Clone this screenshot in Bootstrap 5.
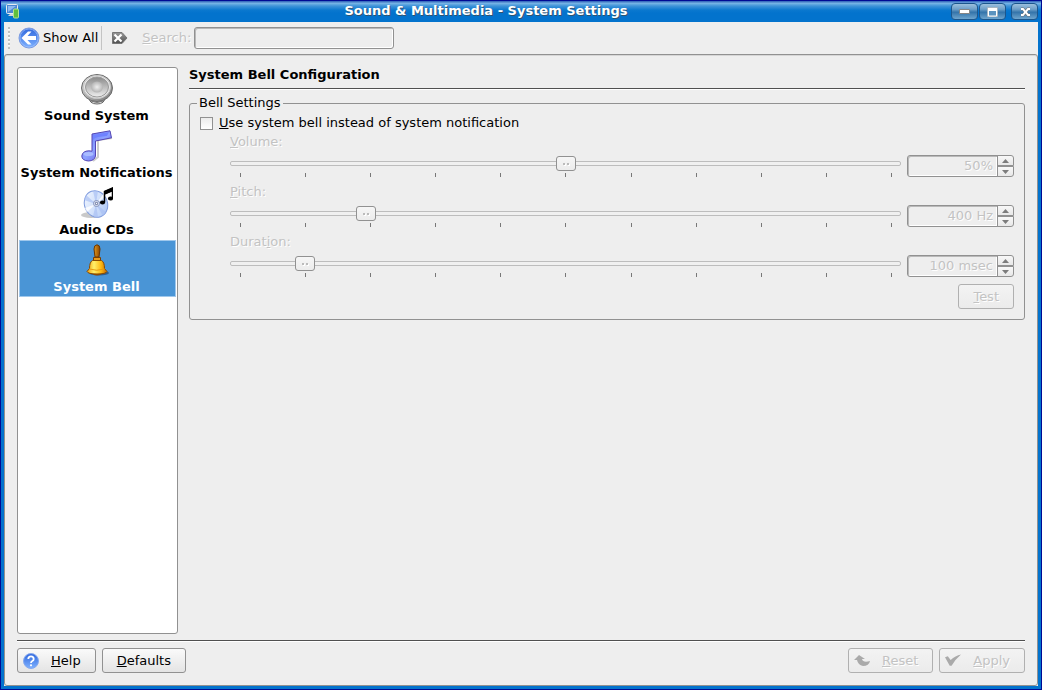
<!DOCTYPE html>
<html lang="en">
<head>
<meta charset="utf-8">
<meta name="viewport" content="width=device-width, initial-scale=1">
<title>Sound &amp; Multimedia - System Settings</title>
<link rel="stylesheet" href="https://cdn.jsdelivr.net/npm/bootstrap@5.3.0/dist/css/bootstrap.min.css">
<style>
  :root { --face: #eeeeee; --edge: #919191; --edge-off: #b0b0b0; --text-off: #c3c3c3; }
  body { font-family: "DejaVu Sans", Verdana, sans-serif; font-size: 13px; line-height: 16px; color: #000; background: #0373cd; }
  .window { border: 1px solid #000a94; background: #0373cd; }
  .titlebar { height: 21px; padding: 2px 3px 0 4px; background: linear-gradient(#3b6fc0 0 1px, #7db8e8 2px, #3f93d8 5px, #0b78cf 9px, #0373cd 12px); }
  .titlebar h1 { font-size: 13px; line-height: 16px; color: #fff; text-shadow: 1px 1px 0 #31536f; }
  .win-btns { gap: 1px; }
  .win-btn { width: 27px; height: 17px; border: 1px solid #1c568c; border-radius: 4px; background: linear-gradient(#9cc0dd, #6d9fc8 35%, #3474aa 55%, #6ea5ce); }
  .win-btn svg { display: block; margin: auto; }
  .client { margin: 0 3px 3px; background: var(--face); }
  .toolbar { height: 32px; padding: 0 4px; }
  .grip { width: 2px; height: 22px; background: repeating-linear-gradient(#c0c0c0 0 2px, #fafafa 2px 3px, transparent 3px 4px); }
  .tool-btn { border: 0; background: none; padding: 0; color: #000; }
  .show-all { gap: 3px; margin-left: 8px; }
  .clear { margin: 0 14px 0 10px; }
  .tool-sep { width: 1px; height: 24px; background: #c4c4c4; margin-left: 3px; }
  .field { border: 1px solid var(--edge); border-radius: 3px; background: var(--face); box-shadow: inset 1px 1px 0 #b9b9b9, inset -1px -1px 0 #fff; padding: 0 4px; }
  .search-box { width: 200px; height: 22px; margin-left: 3px; }
  .off { color: var(--text-off); text-shadow: 1px 1px 0 #fff; }
  .panel { border: 1px solid var(--edge); border-radius: 3px; box-shadow: inset 0 1px 0 #d6d6d6; padding: 12px; }
  .side { width: 161px; background: #fff; border: 1px solid var(--edge); border-radius: 3px; padding: 1px; }
  .side a { height: 57px; padding: 4px 2px 0 0; color: #000; font-weight: bold; text-decoration: none; text-align: center; white-space: nowrap; }
  .side a svg { display: block; margin: 0 auto 3px; }
  .side a.active { background: #4a95d6; color: #fff; box-shadow: inset 0 0 0 1px #a0c8ec; }
  .content { margin-left: 11px; }
  .rule { border-bottom: 1px solid #505050; box-shadow: 0 1px 0 #fff; }
  .foot-rule { height: 7px; }
  .heading { font-size: 13px; line-height: 16px; height: 22px; margin: 0 0 6px; }
  .group { border: 1px solid var(--edge); border-radius: 3px; padding: 4px 10px 10px; }
  .group legend { float: none; width: auto; font-size: 13px; line-height: 16px; padding: 0 2px; margin: 0 0 0 -3px; }
  .tick { appearance: none; width: 13px; height: 13px; margin: 0; border: 1px solid var(--edge); background: linear-gradient(#ececec, #fff); }
  .tick:checked { background: #4a95d6; }
  .choice { gap: 6px; margin-bottom: 3px; }
  .setting { height: 50px; padding-left: 30px; }
  .setting label { margin-bottom: 5px; line-height: 16px; }
  .slide { appearance: none; display: block; width: 100%; height: 15px; margin: 1px 0 2px; background: none; }
  .slide::-webkit-slider-runnable-track { height: 5px; border: 1px solid #bdbdbd; border-radius: 2px; background: #f0f0f0; }
  .slide::-webkit-slider-thumb { appearance: none; width: 20px; height: 15px; margin-top: -6px; border: 1px solid var(--edge); border-radius: 3px;
    background: linear-gradient(#bbb, #bbb) 6px 6px / 2px 2px no-repeat, linear-gradient(#bbb, #bbb) 10px 6px / 2px 2px no-repeat, linear-gradient(#fff, #fff) 7px 7px / 2px 2px no-repeat, linear-gradient(#fff, #fff) 11px 7px / 2px 2px no-repeat, linear-gradient(#f6f6f6, #ececec); }
  .marks { padding: 0 9px 0 10px; height: 4px; }
  .marks i { width: 1px; background: #777; }
  .spin { width: 107px; height: 22px; margin-left: 6px; }
  .spin input { width: 91px; border-radius: 3px 0 0 3px; text-align: right; padding-right: 4px; }
  .spin button { width: 17px; flex: 1; padding: 0; border: 1px solid var(--edge); background: linear-gradient(#f8f8f8, #e8e8e8); line-height: 0; }
  .spin .steps { margin-left: -1px; }
  .spin button:first-child { border-radius: 0 3px 0 0; }
  .spin button:last-child { border-radius: 0 0 3px 0; }
  .push { height: 25px; border: 1px solid var(--edge); border-radius: 3px; padding: 0 14px; color: #000; background: linear-gradient(#fafafa, #e4e4e4); }
  .push:disabled { color: var(--text-off); border-color: var(--edge-off); background: linear-gradient(#f3f3f3, #ebebeb); text-shadow: 1px 1px 0 #fff; }
  .push.with-icon { gap: 12px; padding: 0 14px 0 5px; }
  .footer-bar { padding-top: 7px; gap: 6px; }
</style>
</head>
<body>
<div class="window min-vh-100 d-flex flex-column">
  <header class="titlebar d-flex align-items-start">
    <svg width="16" height="16" viewBox="0 0 16 16" aria-hidden="true">
      <rect x="1.500" y="1.500" width="11" height="9" rx="1" fill="#4b86d2" stroke="#e6eaf0"/>
      <path d="M3 3h8L3 9z" fill="#8fbaf0"/>
      <path d="M3 13h8l-2-2H5z" fill="#cfd3d8"/>
      <rect x="8.500" y="6" width="5" height="9" rx="1" fill="#5fbf3c" stroke="#b4e295"/>
    </svg>
    <h1 class="flex-grow-1 text-center fw-bold m-0">Sound &amp; Multimedia - System Settings</h1>
    <div class="win-btns d-flex">
      <button class="win-btn p-0" aria-label="Minimize"><svg width="25" height="15"><path d="M7.500 5.500h10v4h-10z" fill="#fff" stroke="#858585"/></svg></button>
      <button class="win-btn p-0" aria-label="Maximize"><svg width="25" height="15"><path d="M7.500 3.500h10v9h-10z" fill="#5b93bf" stroke="#a9b7c2"/><path d="M8 4h9v3H8z" fill="#fff"/><path d="M8.500 5v7h8V5" fill="none" stroke="#fff"/></svg></button>
      <button class="win-btn p-0 ms-1" aria-label="Close"><svg width="25" height="15"><path d="M9 5h2l2 2h1l2-2h2M9 11h2l2-2h1l2 2h2M12 8h3" fill="none" stroke="#777" stroke-width="3"/><path d="M9 5h2l2 2.500h1L16 5h2M9 11h2l2-2.500h1l2 2.500h2M12 8h3" fill="none" stroke="#fff" stroke-width="2"/></svg></button>
    </div>
  </header>

  <div class="client flex-grow-1 d-flex flex-column">
    <div class="toolbar d-flex align-items-center" role="toolbar">
      <span class="grip"></span>
      <button class="tool-btn show-all d-flex align-items-center">
        <svg width="22" height="22" viewBox="0 0 22 22" aria-hidden="true">
          <defs><linearGradient id="orb" x2="0" y2="1"><stop stop-color="#2f67dd"/><stop offset="1" stop-color="#7fb2ff"/></linearGradient></defs>
          <circle cx="11" cy="11" r="10" fill="url(#orb)" stroke="#7b9be0"/>
          <circle cx="11" cy="11" r="9" fill="none" stroke="#a9c6fb" stroke-opacity=".6"/>
          <path d="M3.500 11 10 4.500h3.500L9.500 9H18v4H9.500l4 4.500H10z" fill="#fff"/>
        </svg>
        <span>Show All</span>
      </button>
      <span class="tool-sep"></span>
      <button class="tool-btn clear" aria-label="Clear search">
        <svg width="16" height="14" viewBox="0 0 16 14" class="d-block" aria-hidden="true">
          <defs><linearGradient id="tag" x2="0" y2="1"><stop stop-color="#999"/><stop offset="1" stop-color="#4f4f4f"/></linearGradient></defs>
          <path d="M.5 1.500h9.500l5 5.500-5 5.500H.5z" fill="url(#tag)" stroke="#777"/>
          <path d="m2.500 3.500 7 7m0-7-7 7" stroke="#fff" stroke-width="2.200"/>
        </svg>
      </button>
      <label class="off" for="search"><u>S</u>earch:</label>
      <input class="field search-box" id="search" type="text">
    </div>

    <main class="panel flex-grow-1 d-flex flex-column">
      <div class="flex-grow-1 d-flex">
        <nav class="side d-flex flex-column flex-shrink-0">
          <a href="#sound">
            <svg width="32" height="32" viewBox="0 0 32 32" aria-hidden="true">
              <defs><linearGradient id="rim" x2="1" y2="1"><stop stop-color="#ddd"/><stop offset="1" stop-color="#777"/></linearGradient>
              <linearGradient id="cone" x2="0" y2="1"><stop stop-color="#8a8a8a"/><stop offset="1" stop-color="#eee"/></linearGradient>
              <radialGradient id="dome"><stop stop-color="#eee"/><stop offset="1" stop-color="#b4b4b4"/></radialGradient></defs>
              <path d="M8 24q0 7 8 7t8-7z" fill="#ddd" stroke="#666"/>
              <path d="M10 28q6 3 12 0" fill="none" stroke="#777"/>
              <ellipse cx="16" cy="15" rx="15.500" ry="13.500" fill="url(#rim)" stroke="#6c6c6c"/>
              <ellipse cx="16" cy="14" rx="13.500" ry="11.500" fill="#e9e9e9" stroke="#c5c5c5"/>
              <ellipse cx="16" cy="14" rx="11.500" ry="10" fill="url(#cone)" stroke="#999"/>
              <ellipse cx="16" cy="14" rx="6" ry="5.500" fill="url(#dome)"/>
            </svg>Sound System</a>
          <a href="#notifications">
            <svg width="32" height="32" viewBox="0 0 32 32" aria-hidden="true">
              <defs><linearGradient id="note" x2="1" y2="1"><stop stop-color="#6170f5"/><stop offset=".5" stop-color="#8da2ff"/><stop offset="1" stop-color="#5a49dc"/></linearGradient></defs>
              <path d="m12 31 5-4V10l14-2" fill="none" stroke="#ccc" stroke-width="2"/>
              <path d="M11 4 29 .8l1.500 7L14.500 11v15q-1 4.800-7 5Q.8 30.500.8 26q.7-5 7-5.200l3.200.4z" fill="url(#note)" stroke="#5345b4"/>
              <path d="m12 5 16-3-2 4-9 1q-4 1-5 3z" fill="#6f82ff"/>
              <ellipse cx="7.500" cy="24" rx="5" ry="2" fill="#a9bcff"/>
            </svg>System Notifications</a>
          <a href="#cds">
            <svg width="32" height="32" viewBox="0 0 32 32" aria-hidden="true">
              <defs><linearGradient id="disc" x2="1" y2="1"><stop stop-color="#f4f8ff"/><stop offset=".5" stop-color="#d2e1fb"/><stop offset="1" stop-color="#a6c1f3"/></linearGradient></defs>
              <ellipse cx="10" cy="28" rx="10" ry="3" fill="#c9c9c9"/>
              <ellipse cx="15" cy="17" rx="11.500" ry="13.500" transform="rotate(-20 15 17)" fill="url(#disc)" stroke="#7f9bdd"/>
              <path d="M15 17 5 8l-2 5zM15 17l7 12 3-4zM15 17l-3 12 5 1zM15 17l2-13-5 0z" fill="#a7bff3" opacity=".65"/>
              <path d="m15 17-11 4 2 4zM15 17l8-11 2 3z" fill="#fff" opacity=".8"/>
              <circle cx="15.500" cy="16.500" r="3" fill="#e7edfa" stroke="#8291ba"/><circle cx="15.500" cy="16.500" r="1.200" fill="#fff" stroke="#566492"/>
              <path d="M23.500 15V4.500L31.500 1v10M23.500 7l8-3.500" fill="none" stroke="#000" stroke-width="1.500"/>
              <path d="M23.500 4 32 .5v3.500l-8.500 3.500z"/>
              <ellipse cx="21.500" cy="15.500" rx="2.600" ry="2"/><ellipse cx="29.500" cy="11.500" rx="2.600" ry="2"/>
            </svg>Audio CDs</a>
          <a href="#bell" class="active" aria-current="page">
            <svg width="32" height="32" viewBox="0 0 32 32" aria-hidden="true">
              <defs><linearGradient id="brass" x2="1"><stop stop-color="#ee9c0c"/><stop offset=".35" stop-color="#fff06a"/><stop offset=".7" stop-color="#fdb913"/><stop offset="1" stop-color="#c56a00"/></linearGradient>
              <linearGradient id="wood" x2="1"><stop stop-color="#e59a1c"/><stop offset="1" stop-color="#8a4400"/></linearGradient></defs>
              <ellipse cx="18" cy="29" rx="10" ry="2.500" fill="#2d5f91"/>
              <path d="M16 .8q3 .2 3 4.200l-1 8h-4l-1-8q0-4 3-4.200z" fill="url(#wood)" stroke="#6b3600"/>
              <path d="M12.500 13.500h7v3h-7z" fill="#e89a1a" stroke="#7a3e00"/>
              <ellipse cx="16" cy="29" rx="4" ry="2.500" fill="#9a4c00"/>
              <path d="M11.500 16.500h9q3 1.500 3 8l2.500 3q-1 2.500-10 2.500T6 27.500l2.500-3q0-6.500 3-8z" fill="url(#brass)" stroke="#8a4a00"/>
              <path d="M8.500 25q7 2.500 15 0" fill="none" stroke="#e89a10"/>
            </svg>System Bell</a>
        </nav>

        <section class="content flex-grow-1">
          <h2 class="heading rule fw-bold">System Bell Configuration</h2>
          <fieldset class="group">
            <legend>Bell Settings</legend>
            <div class="choice d-flex align-items-center">
              <input class="tick" type="checkbox" id="useBell">
              <label for="useBell"><u>U</u>se system bell instead of system notification</label>
            </div>

            <div class="setting">
              <label class="off d-block" for="volume"><u>V</u>olume:</label>
              <div class="d-flex">
                <div class="flex-grow-1">
                  <input class="slide" type="range" id="volume" min="0" max="100" value="50" disabled>
                  <div class="marks d-flex justify-content-between"><i></i><i></i><i></i><i></i><i></i><i></i><i></i><i></i><i></i><i></i><i></i></div>
                </div>
                <div class="spin d-flex">
                  <input class="field off" type="text" value="50%" aria-label="Volume value" disabled>
                  <div class="steps d-flex flex-column">
                    <button disabled aria-label="Increase volume"><svg width="7" height="4"><path d="M3.500 0 7 4H0z" fill="#7c7c7c"/></svg></button>
                    <button disabled aria-label="Decrease volume"><svg width="7" height="4"><path d="M0 0h7L3.500 4z" fill="#7c7c7c"/></svg></button>
                  </div>
                </div>
              </div>
            </div>

            <div class="setting">
              <label class="off d-block" for="pitch"><u>P</u>itch:</label>
              <div class="d-flex">
                <div class="flex-grow-1">
                  <input class="slide" type="range" id="pitch" min="20" max="2000" value="400" disabled>
                  <div class="marks d-flex justify-content-between"><i></i><i></i><i></i><i></i><i></i><i></i><i></i><i></i><i></i><i></i><i></i></div>
                </div>
                <div class="spin d-flex">
                  <input class="field off" type="text" value="400 Hz" aria-label="Pitch value" disabled>
                  <div class="steps d-flex flex-column">
                    <button disabled aria-label="Increase pitch"><svg width="7" height="4"><path d="M3.500 0 7 4H0z" fill="#7c7c7c"/></svg></button>
                    <button disabled aria-label="Decrease pitch"><svg width="7" height="4"><path d="M0 0h7L3.500 4z" fill="#7c7c7c"/></svg></button>
                  </div>
                </div>
              </div>
            </div>

            <div class="setting">
              <label class="off d-block" for="duration">Durat<u>i</u>on:</label>
              <div class="d-flex">
                <div class="flex-grow-1">
                  <input class="slide" type="range" id="duration" min="1" max="1000" value="100" disabled>
                  <div class="marks d-flex justify-content-between"><i></i><i></i><i></i><i></i><i></i><i></i><i></i><i></i><i></i><i></i><i></i></div>
                </div>
                <div class="spin d-flex">
                  <input class="field off" type="text" value="100 msec" aria-label="Duration value" disabled>
                  <div class="steps d-flex flex-column">
                    <button disabled aria-label="Increase duration"><svg width="7" height="4"><path d="M3.500 0 7 4H0z" fill="#7c7c7c"/></svg></button>
                    <button disabled aria-label="Decrease duration"><svg width="7" height="4"><path d="M0 0h7L3.500 4z" fill="#7c7c7c"/></svg></button>
                  </div>
                </div>
              </div>
            </div>

            <div class="d-flex justify-content-end">
              <button class="push" disabled><u>T</u>est</button>
            </div>
          </fieldset>
        </section>
      </div>

      <div class="rule foot-rule"></div>
      <footer class="footer-bar d-flex">
        <button class="push with-icon d-flex align-items-center">
          <svg width="16" height="16" viewBox="0 0 16 16" aria-hidden="true"><circle cx="8" cy="8" r="7.500" fill="url(#orb)" stroke="#86a9ee"/><path d="M5.300 6q0-2.700 2.700-2.700T10.700 6q0 1.300-1.400 2Q8 8.700 8 10" fill="none" stroke="#fff" stroke-width="1.800"/><circle cx="8" cy="12.300" r="1.100" fill="#fff"/></svg>
          <span><u>H</u>elp</span>
        </button>
        <button class="push"><u>D</u>efaults</button>
        <button class="push with-icon d-flex align-items-center ms-auto" disabled>
          <svg width="16" height="16" viewBox="0 0 16 16" aria-hidden="true"><path d="M0 7 5 2l6 4H8q1 4 8 2-1 5-7 5-5-1-6-6z" fill="#aaa"/></svg>
          <span><u>R</u>eset</span>
        </button>
        <button class="push with-icon d-flex align-items-center" disabled>
          <svg width="16" height="16" viewBox="0 0 17 16" aria-hidden="true"><path d="m0 4 3-1 3 4q5-5 11-6-6 5-10 12H5z" fill="#aaa"/></svg>
          <span><u>A</u>pply</span>
        </button>
      </footer>
    </main>
  </div>
</div>
<script src="https://cdn.jsdelivr.net/npm/bootstrap@5.3.0/dist/js/bootstrap.bundle.min.js"></script>
</body>
</html>
